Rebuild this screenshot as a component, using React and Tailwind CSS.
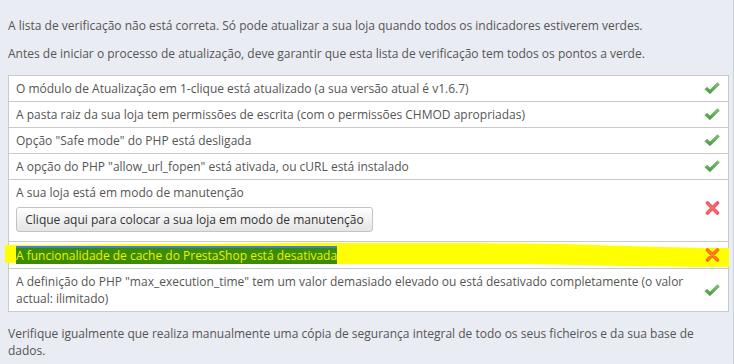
import React from "react";

const font = { fontFamily: '"Open Sans", "Liberation Sans", sans-serif' };

function Check() {
  return (
    <svg width="16" height="13" viewBox="0 0 16 13" className="shrink-0">
      <defs>
        <linearGradient id="g" x1="0" y1="0" x2="0" y2="1">
          <stop offset="0" stopColor="#86c870" />
          <stop offset="1" stopColor="#3f9a3c" />
        </linearGradient>
      </defs>
      <path
        d="M0.8 7.2 L3.2 5.2 L6 8 L13.4 0.8 L15.4 2.6 L6 11.8 Z"
        fill="url(#g)"
        stroke="#4d9e45"
        strokeWidth="0.6"
        strokeLinejoin="round"
      />
    </svg>
  );
}

function Cross({ color = "#f0545a", light = "#ff8a8a" }) {
  return (
    <svg width="15" height="14" viewBox="0 0 15 14" className="shrink-0">
      <path d="M2.5 2 L12.5 12 M12.5 2 L2.5 12" stroke={color} strokeWidth="3.6" strokeLinecap="round" />
      <path d="M2.8 2.2 L12.2 11.6 M12.2 2.2 L2.8 11.6" stroke={light} strokeWidth="1.2" strokeLinecap="round" opacity="0.6" />
    </svg>
  );
}

const checks = [
  { text: "O módulo de Atualização em 1-clique está atualizado (a sua versão atual é v1.6.7)", ok: true },
  { text: "A pasta raiz da sua loja tem permissões de escrita (com o permissões CHMOD apropriadas)", ok: true },
  { text: 'Opção "Safe mode" do PHP está desligada', ok: true },
  { text: 'A opção do PHP "allow_url_fopen" está ativada, ou cURL está instalado', ok: true },
];

export default function App() {
  return (
    <div
      className="min-h-[364px] w-full bg-[#e9ecf2] border-r border-[#cdd1d9] pl-2 pr-[5px] pt-[17px] pb-4 text-[12px] leading-[17px] text-[#555]"
      style={font}
    >
      <p>A lista de verificação não está correta. Só pode atualizar a sua loja quando todos os indicadores estiverem verdes.</p>
      <p className="mt-[11px]">Antes de iniciar o processo de atualização, deve garantir que esta lista de verificação tem todos os pontos a verde.</p>

      <div className="mt-[13px] mr-[5px] w-[721px] border border-[#cacaca] bg-white">
        {checks.map((c, i) => (
          <div key={i} className="flex items-center justify-between border-b border-[#cacaca] pl-[7px] pr-[8px] py-1">
            <span>{c.text}</span>
            <Check />
          </div>
        ))}

        <div className="flex items-center justify-between border-b border-[#cacaca] pl-[7px] pr-[8px] pt-1 pb-[9px]">
          <div className="flex flex-col items-start">
            <span>A sua loja está em modo de manutenção</span>
            <button
              className="mt-[6px] h-[25px] w-[357px] rounded-[3px] border border-[#c4c4c4] bg-gradient-to-b from-[#ffffff] to-[#e4e4e4] text-[12px] text-[#333]"
              style={font}
            >
              Clique aqui para colocar a sua loja em modo de manutenção
            </button>
          </div>
          <Cross />
        </div>

        <div className="relative flex items-center justify-between border-b border-[#cacaca] pl-[7px] pr-[8px] py-1">
          <svg className="absolute left-[-4px] top-[1px] h-[24px] w-[724px]" viewBox="0 0 724 24" preserveAspectRatio="none">
            <polygon
              points="0,2 60,2 130,1 200,1 300,0 400,0 470,0 560,1 620,3 700,5 724,5 724,24 690,24 620,23 520,21 420,21 330,21 230,21 150,21 60,20 0,20"
              fill="#ffff00"
            />
          </svg>
          <span className="relative bg-[#3a8c00] text-[#eef200] shadow-[inset_0_2px_0_#3f7fd6] pt-[1px]">
            A funcionalidade de cache do PrestaShop está desativada
          </span>
          <span className="relative">
            <Cross color="#ff6a00" light="#ff9a40" />
          </span>
        </div>

        <div className="flex items-center justify-between pl-[7px] pr-[8px] py-1">
          <span className="max-w-[676px]">
            A definição do PHP "max_execution_time" tem um valor demasiado elevado ou está desativado completamente (o valor actual: ilimitado)
          </span>
          <Check />
        </div>
      </div>

      <p className="mt-[13px] max-w-[700px]">
        Verifique igualmente que realiza manualmente uma cópia de segurança integral de todo os seus ficheiros e da sua base de dados.
      </p>
    </div>
  );
}
